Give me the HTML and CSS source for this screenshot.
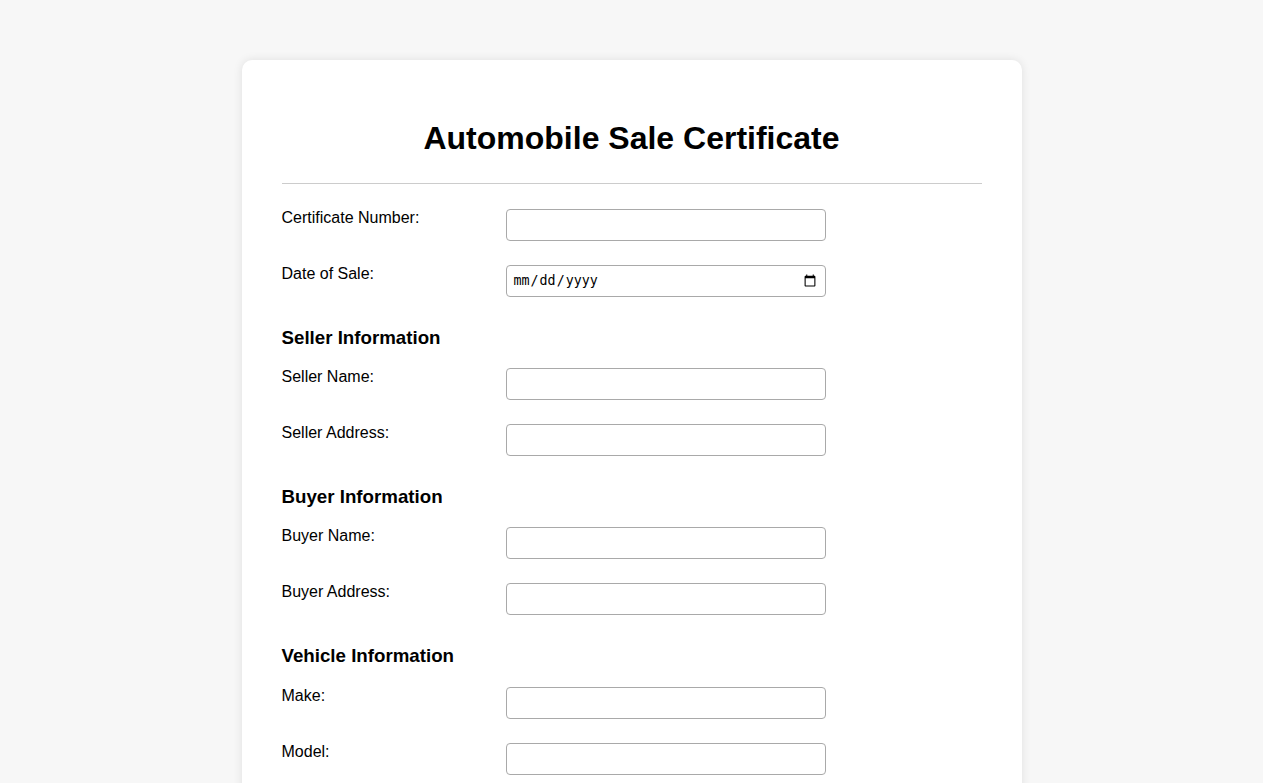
FILE: index.html
```html
<!DOCTYPE html>
<html lang="en">
<head>
<meta charset="utf-8">
<title>Automobile Sale Certificate</title>
<link rel="stylesheet" href="styles.css">
</head>
<body>
<div class="card">
  <div class="header">
    <h1>Automobile Sale Certificate</h1>
  </div>
  <form class="form">
    <div class="row"><label>Certificate Number:</label><input type="text" class="field"></div>
    <div class="row"><label>Date of Sale:</label><input type="date" class="field"></div>

    <h3 class="section">Seller Information</h3>
    <div class="row"><label>Seller Name:</label><input type="text" class="field"></div>
    <div class="row"><label>Seller Address:</label><input type="text" class="field"></div>

    <h3 class="section">Buyer Information</h3>
    <div class="row"><label>Buyer Name:</label><input type="text" class="field"></div>
    <div class="row"><label>Buyer Address:</label><input type="text" class="field"></div>

    <h3 class="section section-last">Vehicle Information</h3>
    <div class="row"><label>Make:</label><input type="text" class="field"></div>
    <div class="row"><label>Model:</label><input type="text" class="field"></div>
    <div class="row"><label>Year:</label><input type="text" class="field"></div>
    <div class="row"><label>VIN:</label><input type="text" class="field"></div>
    <div class="row"><label>Sale Price:</label><input type="text" class="field"></div>
  </form>
</div>
</body>
</html>
```
FILE: styles.css
```css
html, body {
  margin: 0;
  padding: 0;
}
body {
  background: #f7f7f7;
  font-family: "Liberation Sans", Arial, sans-serif;
  color: #000;
  padding: 60px 20px;
}
.card {
  max-width: 700px;
  margin: 0 auto;
  background: #fff;
  padding: 40px;
  border-radius: 10px;
  box-shadow: 0 0 10px rgba(0, 0, 0, 0.1);
}
.header {
  border-bottom: 1px solid #ccc;
  padding-bottom: 26px;
}
.header h1 {
  margin: 20px 0 0;
  font-size: 32px;
  font-weight: bold;
  text-align: center;
}
.form {
  margin: 0;
  padding-top: 24px;
}
.row {
  display: flex;
  align-items: flex-start;
  margin-bottom: 23px;
}
.row label {
  flex: 0 0 224px;
  font-size: 16px;
  line-height: 18px;
  padding-top: 1px;
}
.field {
  box-sizing: border-box;
  width: 320px;
  height: 32px;
  margin: 1px 0 0;
  padding: 0 6px;
  border: 1px solid #a9a9a9;
  border-radius: 4px;
  background: #fff;
}
.section {
  font-size: 18.72px;
  font-weight: bold;
  margin: 30px 0 18px;
}
.section-last {
  margin-bottom: 19px;
}
```
